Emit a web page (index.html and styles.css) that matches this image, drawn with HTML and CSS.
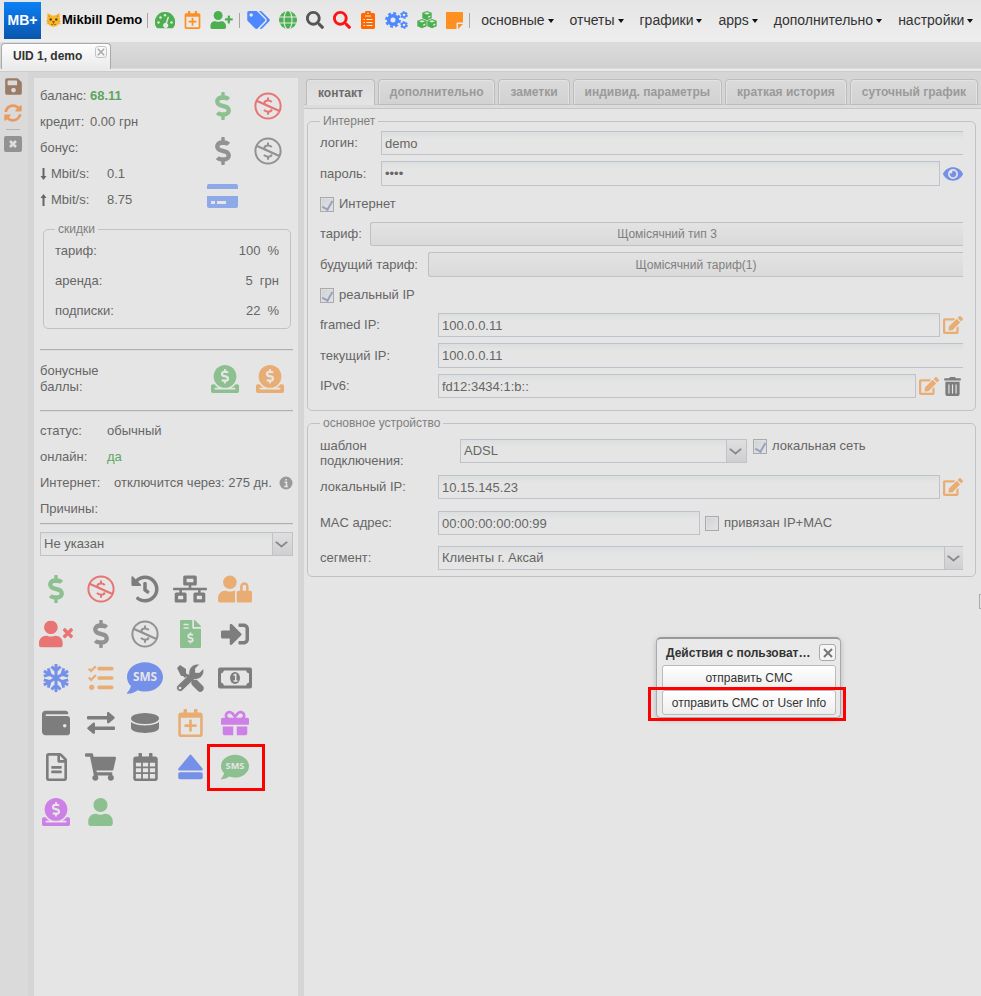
FILE: index.html
```html
<!DOCTYPE html>
<html lang="ru">
<head>
<meta charset="utf-8">
<title>Mikbill Demo</title>
<link rel="stylesheet" href="styles.css">
</head>
<body>
<svg class="sprite" aria-hidden="true">
  <symbol id="dollar" viewBox="0 0 288 512"><path d="M209.200 233.400l-108-31.600C88.700 198.200 80 186.500 80 173.500c0-16.300 13.200-29.500 29.500-29.500h66.300c12.200 0 24.200 3.700 34.200 10.500 6.100 4.100 14.300 3.100 19.500-2l34.800-34c7.100-6.900 6.100-18.400-1.800-24.500C238 74.800 207.400 64.100 176 64V16c0-8.800-7.200-16-16-16h-32c-8.800 0-16 7.200-16 16v48h-2.500C45.800 64-5.400 118.700.5 183.600c4.200 46.100 39.400 83.600 83.800 96.600l102.500 30c12.500 3.700 21.200 15.300 21.200 28.300 0 16.300-13.200 29.500-29.500 29.500h-66.300C100 368 88 364.300 78 357.500c-6.100-4.100-14.300-3.100-19.500 2l-34.800 34c-7.100 6.900-6.100 18.400 1.800 24.500 24.500 19.200 55.100 29.900 86.500 30v48c0 8.800 7.200 16 16 16h32c8.800 0 16-7.200 16-16v-48.200c46.600-.9 90.300-28.600 105.700-72.700 21.500-61.600-14.600-124.800-72.500-141.700z"/></symbol>
  <symbol id="nodollar" viewBox="0 0 28 28"><circle cx="14" cy="14" r="12.600" fill="none" stroke="currentColor" stroke-width="2"/><path d="M17.800 10c-1-1-2.300-1.500-3.900-1.500-2 0-3.500 1-3.500 2.600 0 3.900 7.400 2.100 7.400 5.900 0 1.700-1.600 2.700-3.700 2.700-1.700 0-3.200-.6-4.200-1.800M14 5.500V9M14 19.500v3.300" fill="none" stroke="currentColor" stroke-width="2"/><path d="M4 10.900 24.500 19.900" stroke="#e5e5e5" stroke-width="1"/><path d="M2.500 8.800 25.500 18.900" stroke="currentColor" stroke-width="2.200"/></symbol>
  <symbol id="donate" viewBox="0 0 512 512"><path d="M256 416c114.900 0 208-93.100 208-208S370.900 0 256 0 48 93.100 48 208s93.100 208 208 208z"/><path d="M480 352h-32.500c-19.600 26-44.600 47.700-73 64h63.800c5.300 0 9.600 3.600 9.600 8v16c0 4.400-4.300 8-9.600 8H73.600c-5.300 0-9.600-3.600-9.600-8v-16c0-4.400 4.300-8 9.600-8h63.800c-28.400-16.300-53.300-38-73-64H32c-17.700 0-32 14.300-32 32v96c0 17.700 14.300 32 32 32h448c17.700 0 32-14.300 32-32v-96c0-17.700-14.300-32-32-32z"/><svg x="180" y="70" width="152" height="272" viewBox="0 0 288 512" color="#e5e5e5"><use href="#dollar" width="288" height="512"/></svg></symbol>
  <symbol id="user" viewBox="0 0 448 512"><path d="M224 256c70.700 0 128-57.300 128-128S294.700 0 224 0 96 57.300 96 128s57.300 128 128 128zm89.600 32h-16.700c-22.200 10.200-46.900 16-72.900 16s-50.600-5.800-72.900-16h-16.700C60.200 288 0 348.200 0 422.400V464c0 26.500 21.500 48 48 48h352c26.500 0 48-21.500 48-48v-41.600c0-74.200-60.200-134.400-134.400-134.400z"/></symbol>
  <symbol id="user-plus" viewBox="0 0 640 512"><path d="M624 208h-64v-64c0-8.800-7.200-16-16-16h-32c-8.800 0-16 7.200-16 16v64h-64c-8.800 0-16 7.200-16 16v32c0 8.800 7.200 16 16 16h64v64c0 8.800 7.200 16 16 16h32c8.800 0 16-7.200 16-16v-64h64c8.800 0 16-7.200 16-16v-32c0-8.800-7.200-16-16-16z"/><use href="#user" width="448" height="512"/></symbol>
  <symbol id="user-times" viewBox="0 0 640 512"><path d="M589.600 240l45.600-45.600c6.300-6.300 6.300-16.500 0-22.800l-22.800-22.800c-6.300-6.300-16.500-6.300-22.800 0L544 194.400l-45.600-45.600c-6.300-6.300-16.500-6.300-22.800 0l-22.800 22.800c-6.300 6.300-6.300 16.500 0 22.800l45.600 45.600-45.600 45.600c-6.300 6.300-6.300 16.500 0 22.800l22.800 22.800c6.300 6.300 16.500 6.300 22.800 0l45.600-45.600 45.600 45.600c6.300 6.300 16.500 6.300 22.800 0l22.800-22.800c6.300-6.300 6.300-16.500 0-22.800z"/><use href="#user" width="448" height="512"/></symbol>
  <symbol id="user-lock" viewBox="0 0 640 512"><path d="M224 256A128 128 0 1 0 96 128a128 128 0 0 0 128 128zm96 64a63 63 0 0 1 8-30.500c-4.800-.5-9.500-1.500-14.500-1.500h-16.700a174 174 0 0 1-145.800 0h-16.700A134 134 0 0 0 0 422.400V464a48 48 0 0 0 48 48h281a63.500 63.500 0 0 1-9-32zm288-32h-32v-80a80 80 0 0 0-160 0v80h-32a32 32 0 0 0-32 32v160a32 32 0 0 0 32 32h224a32 32 0 0 0 32-32V320a32 32 0 0 0-32-32zm-80 0h-64v-80a32 32 0 0 1 64 0z"/></symbol>
  <symbol id="search" viewBox="0 0 512 512"><path d="M505 442.700L405.300 343c-4.500-4.500-10.600-7-17-7H372c27.600-35.300 44-79.700 44-128C416 93.100 322.900 0 208 0S0 93.100 0 208s93.100 208 208 208c48.300 0 92.700-16.400 128-44v16.300c0 6.400 2.500 12.500 7 17l99.700 99.700c9.400 9.400 24.600 9.400 33.900 0l28.300-28.300c9.400-9.400 9.400-24.600.1-34zM208 336c-70.700 0-128-57.200-128-128 0-70.700 57.200-128 128-128 70.700 0 128 57.200 128 128 0 70.700-57.200 128-128 128z"/></symbol>
  <symbol id="history" viewBox="0 0 512 512"><path d="M504 255.500c.3 136.700-111.200 248.400-247.800 248.500-59 0-113.200-20.500-155.800-54.900-11.100-8.900-11.900-25.500-1.900-35.600l11.300-11.300c8.600-8.600 22.400-9.600 31.900-2C173 425 212.800 440 256 440c101.700 0 184-82.300 184-184 0-101.700-82.300-184-184-184-48.800 0-93.100 19-126 49.900l50.700 50.800c10 10 2.900 27.300-11.300 27.300H24c-8.800 0-16-7.200-16-16V38.600c0-14.200 17.200-21.400 27.300-11.300l49.400 49.400C129.200 34 189.500 8 256 8c136.800 0 247.700 110.800 248 247.500zm-181 78.800l9.900-12.600c8.100-10.500 6.200-25.600-4.200-33.700L288 256.300V152c0-13.300-10.700-24-24-24h-16c-13.300 0-24 10.700-24 24v135.700l65.400 50.800c10.500 8.200 25.500 6.300 33.700-4.200z"/></symbol>
  <symbol id="network" viewBox="0 0 640 512"><path fill-rule="evenodd" d="M640 264v-16c0-8.800-7.200-16-16-16H344v-40h72c17.700 0 32-14.300 32-32V32c0-17.700-14.300-32-32-32H224c-17.700 0-32 14.300-32 32v128c0 17.700 14.300 32 32 32h72v40H16c-8.800 0-16 7.200-16 16v16c0 8.800 7.200 16 16 16h104v40H64c-17.700 0-32 14.300-32 32v128c0 17.700 14.300 32 32 32h160c17.700 0 32-14.300 32-32V352c0-17.700-14.300-32-32-32h-56v-40h304v40h-56c-17.700 0-32 14.300-32 32v128c0 17.700 14.300 32 32 32h160c17.700 0 32-14.300 32-32V352c0-17.700-14.300-32-32-32h-56v-40h104c8.800 0 16-7.200 16-16zM256 128V64h128v64zm-64 320H96v-64h96zm352 0h-96v-64h96z"/></symbol>
  <symbol id="signin" viewBox="0 0 512 512"><path d="M416 448h-84c-6.600 0-12-5.400-12-12v-40c0-6.600 5.400-12 12-12h84c17.700 0 32-14.300 32-32V160c0-17.700-14.300-32-32-32h-84c-6.600 0-12-5.400-12-12V76c0-6.600 5.400-12 12-12h84c53 0 96 43 96 96v192c0 53-43 96-96 96zm-47-201L201 79c-15-15-41-4.500-41 17v96H24c-13.300 0-24 10.700-24 24v96c0 13.300 10.700 24 24 24h136v96c0 21.500 26 32 41 17l168-168c9.300-9.400 9.300-24.600 0-34z"/></symbol>
  <symbol id="edit" viewBox="0 0 576 512"><path d="M402.600 83.200l90.200 90.200c3.800 3.800 3.800 10 0 13.800L274.400 405.600l-92.800 10.300c-12.400 1.400-22.900-9.100-21.500-21.500l10.300-92.800L388.800 83.200c3.800-3.800 10-3.800 13.800 0zm162-22.900l-48.800-48.800c-15.200-15.200-39.900-15.200-55.200 0l-35.400 35.400c-3.800 3.800-3.800 10 0 13.800l90.200 90.200c3.800 3.800 10 3.800 13.800 0l35.400-35.400c15.200-15.300 15.200-40 0-55.200zM384 346.200V448H64V128h229.800c3.200 0 6.200-1.300 8.500-3.500l40-40c7.600-7.600 2.200-20.500-8.500-20.500H48C21.500 64 0 85.500 0 112v352c0 26.500 21.500 48 48 48h352c26.500 0 48-21.500 48-48V306.200c0-10.700-12.900-16-20.500-8.500l-40 40c-2.200 2.300-3.500 5.300-3.500 8.500z"/></symbol>
  <symbol id="trash" viewBox="0 0 448 512"><path d="M32 464a48 48 0 0 0 48 48h288a48 48 0 0 0 48-48V128H32zm272-256a16 16 0 0 1 32 0v224a16 16 0 0 1-32 0zm-96 0a16 16 0 0 1 32 0v224a16 16 0 0 1-32 0zm-96 0a16 16 0 0 1 32 0v224a16 16 0 0 1-32 0zM432 32H312l-9.400-18.700A24 24 0 0 0 281 0H166.800a23.700 23.700 0 0 0-21.400 13.300L136 32H16A16 16 0 0 0 0 48v32a16 16 0 0 0 16 16h416a16 16 0 0 0 16-16V48a16 16 0 0 0-16-16z"/></symbol>
  <symbol id="eye" viewBox="0 0 576 512"><path d="M572.500 241.400C518.300 135.600 411 64 288 64S57.700 135.600 3.500 241.400a32.400 32.400 0 0 0 0 29.200C57.700 376.400 165 448 288 448s230.300-71.600 284.500-177.400a32.400 32.400 0 0 0 0-29.200zM288 400a144 144 0 1 1 144-144 144 144 0 0 1-144 144zm0-240a95.300 95.300 0 0 0-25.300 3.800 47.900 47.900 0 0 1-66.900 66.900A95.800 95.800 0 1 0 288 160z"/></symbol>
  <symbol id="save" viewBox="0 0 448 512"><path d="M434 130l-84-84a48 48 0 0 0-34-14H48C21.500 32 0 53.500 0 80v352c0 26.500 21.500 48 48 48h352c26.500 0 48-21.500 48-48V164a48 48 0 0 0-14-34zM224 416c-35.300 0-64-28.700-64-64s28.700-64 64-64 64 28.700 64 64-28.700 64-64 64zm96-304.500V212c0 6.600-5.400 12-12 12H76c-6.600 0-12-5.400-12-12V108c0-6.600 5.400-12 12-12h228.500c3.200 0 6.200 1.300 8.500 3.500l3.500 3.500a12 12 0 0 1 3.500 8.500z"/></symbol>
  <symbol id="sync" viewBox="0 0 512 512"><path d="M370.700 133.300C339.500 104 298.900 88 255.800 88c-77.400 0-144.300 53.200-162.700 126.900-1.400 5.300-6.200 9.100-11.700 9.100H24.100c-7.500 0-13.200-6.800-11.800-14.200C33.900 94.900 134.800 8 256 8c66.400 0 126.800 26.100 171.300 68.700L463 41c15.100-15.100 41-4.400 41 17v134c0 13.300-10.700 24-24 24H346c-21.400 0-32.100-25.900-17-41zM32 296h134c21.400 0 32.100 25.900 17 41l-41.700 41.700c31.300 29.300 71.800 45.300 114.900 45.300 77.400-.1 144.300-53.100 162.700-126.800 1.400-5.400 6.200-9.200 11.700-9.200h57.300c7.500 0 13.200 6.800 11.800 14.200C478 417 377.200 504 256 504c-66.400 0-126.800-26.100-171.300-68.700L49 471c-15.100 15.100-41 4.400-41-17V320c0-13.300 10.700-24 24-24z"/></symbol>
  <symbol id="tags" viewBox="0 0 640 512"><path d="M498 226L286 14a48 48 0 0 0-34-14H48C21.500 0 0 21.500 0 48v204a48 48 0 0 0 14 34l212 212c18.700 18.700 49 18.700 67.800 0l204.200-204.200c18.700-18.700 18.700-49.100 0-67.800zM112 160c-26.500 0-48-21.500-48-48s21.500-48 48-48 48 21.500 48 48-21.500 48-48 48zm514 133.800L421.800 498c-18.700 18.700-49.100 18.700-67.800 0l-.4-.4 174-174.100c17-17 26.400-39.600 26.400-63.600s-9.400-46.700-26.400-63.700L331.400 0h48.700a48 48 0 0 1 34 14L626 226c18.700 18.700 18.700 49.100 0 67.800z"/></symbol>
  <symbol id="cart" viewBox="0 0 576 512"><path d="M528 301.300l47.400-208C578.800 78.300 567.400 64 552 64H159.200L150 19.200C147.800 8 138 0 126.500 0H24C10.700 0 0 10.700 0 24v16c0 13.300 10.700 24 24 24h69.900L164 407.400C147.300 417 136 435.200 136 456c0 30.900 25 56 56 56s56-25.100 56-56c0-15.700-6.400-29.800-16.800-40h209.600C430.400 426.200 424 440.300 424 456c0 30.900 25 56 56 56s56-25.100 56-56c0-22.200-12.900-41.300-31.600-50.400l5.500-24.300c3.400-15-8-29.300-23.400-29.300H218l-6.500-32h293.200c11.200 0 21-7.800 23.300-18.700z"/></symbol>
  <symbol id="wallet" viewBox="0 0 512 512"><path d="M461 128H80c-8.800 0-16-7.200-16-16s7.200-16 16-16h384c8.800 0 16-7.200 16-16 0-26.500-21.500-48-48-48H64C28.700 32 0 60.700 0 96v320c0 35.300 28.700 64 64 64h397c28 0 51-21.500 51-48V176c0-26.500-23-48-51-48zM416 336c-17.700 0-32-14.300-32-32s14.300-32 32-32 32 14.300 32 32-14.300 32-32 32z"/></symbol>
  <symbol id="eject" viewBox="0 0 448 512"><path d="M448 384v64c0 17.700-14.300 32-32 32H32c-17.700 0-32-14.300-32-32v-64c0-17.700 14.300-32 32-32h384c17.700 0 32 14.300 32 32zM26 320h396c25 0 36-20 18-40L243 40c-10-11-28-11-38 0L8 280c-18 20-7 40 18 40z"/></symbol>
  <symbol id="gift" viewBox="0 0 512 512"><path d="M32 448c0 17.700 14.300 32 32 32h160V320H32zm256 32h160c17.700 0 32-14.300 32-32V320H288zm192-320h-42c6.200-12 10-25.500 10-40 0-48.500-39.500-88-88-88-41.600 0-68.500 21.300-103 68.300C222.500 53.300 195.600 32 154 32c-48.500 0-88 39.500-88 88 0 14.500 3.800 27.900 10 40H32c-17.700 0-32 14.300-32 32v80c0 8.800 7.200 16 16 16h480c8.800 0 16-7.200 16-16v-80c0-17.700-14.300-32-32-32zm-326 0c-22 0-40-17.900-40-40s18-40 40-40c19.900 0 34.600 3.300 86 80zm206 0h-86c51.400-76.500 65.700-80 86-80 22 0 40 17.900 40 40s-18 40-40 40z"/></symbol>
  <symbol id="cal-plus" viewBox="0 0 448 512"><path d="M336 292v24c0 6.600-5.400 12-12 12h-76v76c0 6.600-5.400 12-12 12h-24c-6.600 0-12-5.400-12-12v-76h-76c-6.600 0-12-5.400-12-12v-24c0-6.600 5.400-12 12-12h76v-76c0-6.600 5.400-12 12-12h24c6.600 0 12 5.400 12 12v76h76c6.600 0 12 5.400 12 12zm112-180v352c0 26.500-21.500 48-48 48H48c-26.500 0-48-21.500-48-48V112c0-26.500 21.500-48 48-48h48V12c0-6.600 5.400-12 12-12h40c6.600 0 12 5.400 12 12v52h128V12c0-6.600 5.400-12 12-12h40c6.600 0 12 5.400 12 12v52h48c26.500 0 48 21.500 48 48zm-48 346V160H48v298c0 3.300 2.700 6 6 6h340c3.300 0 6-2.700 6-6z"/></symbol>
  <symbol id="calendar" viewBox="0 0 448 512"><path fill-rule="evenodd" d="M400 64h-48V12c0-6.600-5.400-12-12-12h-40c-6.600 0-12 5.400-12 12v52H160V12c0-6.600-5.400-12-12-12h-40c-6.600 0-12 5.400-12 12v52H48C21.500 64 0 85.500 0 112v352c0 26.500 21.500 48 48 48h352c26.500 0 48-21.500 48-48V112c0-26.500-21.500-48-48-48zM48 176h96v72H48zm128 0h96v72h-96zm128 0h96v72h-96zM48 280h96v72H48zm128 0h96v72h-96zm128 0h96v72h-96zM48 384h96v80H48zm128 0h96v80h-96zm128 0h96v80h-96z"/></symbol>
  <symbol id="file" viewBox="0 0 384 512"><path d="M288 248v28c0 6.600-5.400 12-12 12H108c-6.600 0-12-5.400-12-12v-28c0-6.600 5.400-12 12-12h168c6.600 0 12 5.400 12 12zm-12 72H108c-6.600 0-12 5.400-12 12v28c0 6.600 5.400 12 12 12h168c6.600 0 12-5.400 12-12v-28c0-6.600-5.400-12-12-12zm108-188V464c0 26.500-21.500 48-48 48H48c-26.500 0-48-21.500-48-48V48C0 21.500 21.500 0 48 0h204c12.800 0 25 5 34 14l84 84c9 9 14 21.200 14 34zm-128-80v76h76zm80 412V176H232c-13.300 0-24-10.700-24-24V48H48v416z"/></symbol>
  <symbol id="invoice" viewBox="0 0 384 512"><path fill-rule="evenodd" d="M377 105L279 7c-4-4-10-7-17-7h-6v128h128v-6c0-6-3-12-7-17zM224 136V0H24C11 0 0 11 0 24v464c0 13 11 24 24 24h336c13 0 24-11 24-24V160H248c-13 0-24-11-24-24zM64 68h96v28H64zm0 64h96v28H64z"/><svg x="132" y="222" width="120" height="214" viewBox="0 0 288 512" color="#e5e5e5"><use href="#dollar" width="288" height="512"/></svg></symbol>
  <symbol id="sms" viewBox="0 0 512 512"><path d="M256 32C114.600 32 0 125 0 240c0 49.600 21.400 95 57 130.700C44.500 421 2.700 466 2.200 466.500c-2.200 2.300-2.800 5.700-1.500 8.700S4.800 480 8 480c66.300 0 116-31.800 140.600-51.400 32.700 12.300 69 19.400 107.400 19.400 141.400 0 256-93 256-208S397.400 32 256 32z"/><text x="256" y="300" text-anchor="middle" class="sms-text">SMS</text></symbol>
  <symbol id="snow" viewBox="0 0 28 28"><g id="snow-arm" fill="none" stroke="currentColor" stroke-width="3"><path d="M14 0v28M9.500 2.500 14 7l4.500-4.500M9.500 25.500 14 21l4.500 4.500"/></g><use href="#snow-arm" transform="rotate(60 14 14)"/><use href="#snow-arm" transform="rotate(120 14 14)"/></symbol>
  <symbol id="tasks" viewBox="0 0 28 28"><path d="M12 4h13.500M12 14h13.500M12 24h13.500" stroke="currentColor" stroke-width="4" stroke-linecap="round"/><circle cx="4" cy="24" r="2.800"/><path d="m.8 4 2.500 2.500L8.500 1.300M.8 13.500 3.300 16l5.200-5.200" fill="none" stroke="currentColor" stroke-width="2.400"/></symbol>
  <symbol id="tools" viewBox="0 0 28 28"><path d="M1 4 4 1l6 4v4l5 5-3 3-5-5H5zM15 18c0-3 3-4.500 5-3l7 7c2 2 0 6-2.500 6-1 0-2-.5-2.500-1l-6-6c-.7-.8-1-2-1-3z"/><path d="M13 10.500C12 5 16 0 22 0l1.500.4-4 4v4h4l4-4C29 10 25 16 18 15.500L6.500 26.500c-3 3-8-1.500-5-5z" stroke="#e5e5e5" stroke-width=".8"/><circle cx="4" cy="24" r="1.300" fill="#e5e5e5"/><path d="m11 11 8 8" stroke="currentColor" stroke-width="3"/></symbol>
  <symbol id="bill" viewBox="0 0 34 22"><rect width="34" height="21" y=".5" rx="2"/><path d="M6 3.500h22a4 4 0 0 0 3 3v9a4 4 0 0 0-3 3H6a4 4 0 0 0-3-3v-9a4 4 0 0 0 3-3z" fill="#e5e5e5"/><ellipse cx="17" cy="11" rx="5" ry="6"/><path d="M15.500 8.500 17 7.500h.7v6.500M15.500 14h4" fill="none" stroke="#e5e5e5" stroke-width="1.500"/></symbol>
  <symbol id="card" viewBox="0 0 31 24"><path d="M0 5V2a2 2 0 0 1 2-2h27a2 2 0 0 1 2 2v3z"/><path fill-rule="evenodd" d="M0 12h31v10a2 2 0 0 1-2 2H2a2 2 0 0 1-2-2zm4 5v3h4v-3zm6 0v3h9v-3z"/></symbol>
  <symbol id="coin" viewBox="0 0 28 20"><ellipse cx="14" cy="5.500" rx="14" ry="5.500"/><path d="M0 9c5 4.500 23 4.500 28 0v6c-1 6.500-27 6.500-28 0z"/></symbol>
  <symbol id="exchange" viewBox="0 0 28 22"><path d="M1.500 4H20V1.500c0-1.300 1.300-1.800 2.200-1l5 4.200c.8.700.8 1.300 0 2l-5 4.300c-.9.800-2.200.3-2.200-1V7.500H1.500C.5 7.500 0 7 0 6.500V5c0-.6.500-1 1.500-1zM26.500 14.500H8V12c0-1.300-1.300-1.800-2.200-1l-5 4.300c-.8.700-.8 1.300 0 2l5 4.200c.9.800 2.200.3 2.200-1V18h18.500c1 0 1.500-.4 1.500-1v-1.500c0-.6-.5-1-1.500-1z"/></symbol>
  <symbol id="gauge" viewBox="0 0 20 17"><path d="M10 0a10 10 0 0 1 8.500 15.500c-.3.500-.7.800-1.300.8H2.800c-.6 0-1-.3-1.300-.8A10 10 0 0 1 10 0z"/><g fill="#e9e9e9"><circle cx="3.500" cy="10.500" r="1.200"/><circle cx="5.500" cy="5.500" r="1.200"/><circle cx="10" cy="3.200" r="1.200"/><circle cx="16.500" cy="10.500" r="1.200"/><path d="m12.800 4.500 1.300.4-2 6.300a2.600 2.600 0 1 1-1.300-.4z"/></g></symbol>
  <symbol id="globe" viewBox="0 0 18 18"><circle cx="9" cy="9" r="9"/><g fill="none" stroke="#e9e9e9" stroke-width="1.100"><ellipse cx="9" cy="9" rx="4" ry="9.500"/><path d="M0 6h18M0 12h18"/></g></symbol>
  <symbol id="clipboard" viewBox="0 0 14 18"><path fill-rule="evenodd" d="M1.500 2H4a3 3 0 0 1 6 0h2.500c.8 0 1.500.7 1.500 1.500v13c0 .8-.7 1.500-1.500 1.500h-11C.7 18 0 17.300 0 16.500v-13C0 2.700.7 2 1.500 2z"/><path d="M4 5h6M5.500 8.500h6M5.500 11.500h6M5.500 14.500h6M2.500 8.500H4M2.500 11.500H4M2.500 14.500H4" stroke="#eee" stroke-width="1.100"/><circle cx="7" cy="2.200" r=".8" fill="#eee"/></symbol>
  <symbol id="cogs" viewBox="0 0 23 18"><g fill="none" stroke="currentColor"><circle cx="8" cy="9" r="4.300" stroke-width="3.600"/><circle cx="8" cy="9" r="6.700" stroke-width="2.400" stroke-dasharray="3 2.262"/><circle cx="19" cy="4" r="2.100" stroke-width="1.600"/><circle cx="19" cy="4" r="3.200" stroke-width="1.300" stroke-dasharray="2 1.351"/><circle cx="19" cy="14" r="2.100" stroke-width="1.600"/><circle cx="19" cy="14" r="3.200" stroke-width="1.300" stroke-dasharray="2 1.351"/></g></symbol>
  <symbol id="cubes" viewBox="0 0 20 18"><g id="cube-one"><path d="m10 0 4.700 1.700v5.500L10 9.300 5.300 7.200V1.700z"/><path d="m7 2.300 3-1 3 1-3 1.100zM11.300 7V5.300l2-.8v1.600z" fill="#e9e9e9"/></g><use href="#cube-one" transform="translate(-5 8)"/><use href="#cube-one" transform="translate(5 8)"/></symbol>
  <symbol id="note" viewBox="0 0 17 17"><path d="M1 0h15c.6 0 1 .4 1 1v9.500h-5.500c-.6 0-1 .4-1 1V17H1c-.6 0-1-.4-1-1V1c0-.6.400-1 1-1zM17 12l-5 5v-5z"/></symbol>
  <symbol id="close-box" viewBox="0 0 18 16"><rect width="18" height="16" rx="2"/><path d="m6 5 6 6m0-6-6 6" stroke="#dedede" stroke-width="2.600"/></symbol>
  <symbol id="info" viewBox="0 0 14 14"><circle cx="7" cy="7" r="6.500"/><path d="M5.500 6.300h2v4M5.300 10.500h3.600M6.300 3.700h1.500" fill="none" stroke="#e5e5e5" stroke-width="1.500"/></symbol>
  <symbol id="down" viewBox="0 0 6 12"><path d="M2 0h2v8h2l-3 4-3-4h2z"/></symbol>
  <symbol id="up" viewBox="0 0 6 12"><path d="M2 12h2V4h2L3 0 0 4h2z"/></symbol>
  <symbol id="cross" viewBox="0 0 10 10"><path d="m1 1 8 8m0-8-8 8" stroke="currentColor" stroke-width="2"/></symbol>
  <symbol id="cat" viewBox="0 0 15 14"><path d="M1.500 0 6 2.500h3L13.500 0l.5 7c0 9-13 9-13 0z" fill="#fbb929"/><path d="m2.500 2 2 1-1.500 2zm10 0-2 1 1.500 2z" fill="#e08a3c"/><circle cx="4.700" cy="6.500" r="1.200" fill="#5a3d17"/><circle cx="10.300" cy="6.500" r="1.200" fill="#5a3d17"/><path d="M6.500 8.500h2l-1 1.500zM5 11c1 1 2 .7 2.500-.5.500 1.200 1.500 1.500 2.500.5" fill="none" stroke="#7a4a1b" stroke-width=".8"/><path d="m0 8 3 .7M0 11l3-.8M15 8l-3 .7M15 11l-3-.8" stroke="#c98a2a" stroke-width=".5"/></symbol>
</svg>

<header class="topbar">
  <div class="logo">MB+</div>
  <div class="brand"><svg class="cat"><use href="#cat"/></svg>Mikbill Demo</div>
  <i class="sep"></i>
  <div class="tools">
    <svg class="green" width="20" height="17"><use href="#gauge"/></svg>
    <svg class="orange" width="17" height="18"><use href="#cal-plus"/></svg>
    <svg class="green" width="23" height="18"><use href="#user-plus"/></svg>
  </div>
  <i class="sep"></i>
  <div class="tools">
    <svg class="blue" width="23" height="18"><use href="#tags"/></svg>
    <svg class="green" width="18" height="18"><use href="#globe"/></svg>
    <svg class="dark" width="18" height="18"><use href="#search"/></svg>
    <svg class="red" width="18" height="18"><use href="#search"/></svg>
    <svg class="deep" width="16" height="18"><use href="#clipboard"/></svg>
    <svg class="blue" width="23" height="18"><use href="#cogs"/></svg>
    <svg class="green" width="20" height="18"><use href="#cubes"/></svg>
    <svg class="orange" width="17" height="17"><use href="#note"/></svg>
  </div>
  <i class="sep"></i>
  <nav class="menu">
    <a href="#">основные</a><a href="#">отчеты</a><a href="#">графики</a><a href="#">apps</a><a href="#">дополнительно</a><a href="#">настройки</a>
  </nav>
</header>

<div class="doc-tabs">
  <div class="doc-tab"><span>UID 1, demo</span><button class="doc-close" aria-label="Закрыть вкладку"><svg width="8" height="8"><use href="#cross"/></svg></button></div>
</div>

<main class="workspace">
  <aside class="rail">
    <button aria-label="Сохранить"><svg class="m-brown" width="17" height="19"><use href="#save"/></svg></button>
    <button aria-label="Обновить"><svg class="m-peach" width="18" height="18"><use href="#sync"/></svg></button>
    <i class="rail-line"></i>
    <button aria-label="Закрыть"><svg class="m-grey" width="18" height="16"><use href="#close-box"/></svg></button>
  </aside>

  <section class="summary">
    <div class="balance">
      <dl class="facts">
        <div><dt class="tight">баланс:</dt><dd class="money">68.11</dd></div>
        <div><dt class="tight">кредит:</dt><dd>0.00 грн</dd></div>
        <div><dt>бонус:</dt><dd></dd></div>
        <div><dt><svg width="7" height="12"><use href="#down"/></svg>Mbit/s:</dt><dd>0.1</dd></div>
        <div><dt><svg width="7" height="12"><use href="#up"/></svg>Mbit/s:</dt><dd>8.75</dd></div>
      </dl>
      <div class="pay">
        <button aria-label="Пополнить"><svg class="m-green" width="16" height="28"><use href="#dollar"/></svg></button>
        <button aria-label="Списать"><svg class="m-red" width="28" height="28"><use href="#nodollar"/></svg></button>
        <button aria-label="Бонус"><svg class="m-grey" width="16" height="28"><use href="#dollar"/></svg></button>
        <button aria-label="Снять бонус"><svg class="m-grey" width="28" height="28"><use href="#nodollar"/></svg></button>
        <button aria-label="Карта"><svg class="m-sky" width="31" height="24"><use href="#card"/></svg></button>
      </div>
    </div>

    <fieldset class="discounts">
      <legend>скидки</legend>
      <div class="rate"><span>тариф:</span><span>100</span><span>%</span></div>
      <div class="rate"><span>аренда:</span><span>5</span><span>грн</span></div>
      <div class="rate"><span>подписки:</span><span>22</span><span>%</span></div>
    </fieldset>

    <hr>
    <div class="points">
      <span>бонусные<br>баллы:</span>
      <button aria-label="Начислить баллы"><svg class="m-green" width="28" height="28"><use href="#donate"/></svg></button>
      <button aria-label="Списать баллы"><svg class="m-orange" width="28" height="28"><use href="#donate"/></svg></button>
    </div>
    <hr>

    <dl class="facts status">
      <div><dt>статус:</dt><dd>обычный</dd></div>
      <div><dt>онлайн:</dt><dd class="yes">да</dd></div>
      <div class="net"><dt>Интернет:</dt><dd>отключится через: 275 дн.</dd><svg width="14" height="14"><use href="#info"/></svg></div>
      <div><dt><label for="reason">Причины:</label></dt></div>
    </dl>
    <hr>
    <div class="combo reason"><select id="reason"><option>Не указан</option></select></div>

    <div class="actions">
      <button aria-label="Платеж"><svg class="m-green" width="16" height="28"><use href="#dollar"/></svg></button>
      <button aria-label="Списание"><svg class="m-red" width="28" height="28"><use href="#nodollar"/></svg></button>
      <button aria-label="История"><svg class="m-dark" width="28" height="28"><use href="#history"/></svg></button>
      <button aria-label="Сеть"><svg class="m-dark" width="34" height="28"><use href="#network"/></svg></button>
      <button aria-label="Блокировка"><svg class="m-orange" width="34" height="28"><use href="#user-lock"/></svg></button>
      <button aria-label="Удалить"><svg class="m-red" width="34" height="28"><use href="#user-times"/></svg></button>
      <button aria-label="Бонусный платеж"><svg class="m-grey" width="16" height="28"><use href="#dollar"/></svg></button>
      <button aria-label="Бонусное списание"><svg class="m-grey" width="28" height="28"><use href="#nodollar"/></svg></button>
      <button aria-label="Счет"><svg class="m-green" width="21" height="28"><use href="#invoice"/></svg></button>
      <button aria-label="Войти"><svg class="m-dark" width="28" height="28"><use href="#signin"/></svg></button>
      <button aria-label="Заморозка"><svg class="m-blue" width="28" height="28"><use href="#snow"/></svg></button>
      <button aria-label="Задачи"><svg class="m-orange" width="28" height="26"><use href="#tasks"/></svg></button>
      <button aria-label="SMS"><svg class="m-blue" width="36" height="36"><use href="#sms"/></svg></button>
      <button aria-label="Сервис"><svg class="m-dark" width="28" height="28"><use href="#tools"/></svg></button>
      <button aria-label="Наличные"><svg class="m-dark" width="34" height="22"><use href="#bill"/></svg></button>
      <button aria-label="Кошелек"><svg class="m-dark" width="28" height="28"><use href="#wallet"/></svg></button>
      <button aria-label="Перевод"><svg class="m-dark" width="28" height="22"><use href="#exchange"/></svg></button>
      <button aria-label="Монеты"><svg class="m-dark" width="28" height="20"><use href="#coin"/></svg></button>
      <button aria-label="Добавить дату"><svg class="m-orange" width="25" height="28"><use href="#cal-plus"/></svg></button>
      <button aria-label="Подарок"><svg class="m-violet" width="28" height="28"><use href="#gift"/></svg></button>
      <button aria-label="Документ"><svg class="m-dark" width="21" height="28"><use href="#file"/></svg></button>
      <button aria-label="Корзина"><svg class="m-dark" width="31" height="28"><use href="#cart"/></svg></button>
      <button aria-label="Календарь"><svg class="m-dark" width="25" height="28"><use href="#calendar"/></svg></button>
      <button aria-label="Извлечь"><svg class="m-blue" width="25" height="28"><use href="#eject"/></svg></button>
      <button class="marked" aria-label="Отправить SMS"><svg class="m-green" width="28" height="28"><use href="#sms"/></svg></button>
      <button aria-label="Подарить баллы"><svg class="m-violet" width="28" height="28"><use href="#donate"/></svg></button>
      <button aria-label="Профиль"><svg class="m-green" width="25" height="28"><use href="#user"/></svg></button>
    </div>
  </section>

  <section class="details">
    <div class="tabs" role="tablist">
      <button class="tab active" role="tab">контакт</button><button class="tab" role="tab">дополнительно</button><button class="tab" role="tab">заметки</button><button class="tab" role="tab">индивид. параметры</button><button class="tab" role="tab">краткая история</button><button class="tab" role="tab">суточный график</button>
    </div>
    <div class="tab-body">
      <fieldset class="group">
        <legend>Интернет</legend>
        <div class="row"><label class="l-short" for="login">логин:</label><input class="cut" id="login" type="text" value="demo"></div>
        <div class="row tall"><label class="l-short" for="pass">пароль:</label><input id="pass" type="password" value="demo"><button class="ico" aria-label="Показать пароль"><svg class="m-blue" width="20" height="18"><use href="#eye"/></svg></button></div>
        <div class="row"><label class="check"><input type="checkbox" checked>Интернет</label></div>
        <div class="row"><span class="l-plan">тариф:</span><button class="plan">Щомісячний тип 3</button></div>
        <div class="row tall"><span class="l-next">будущий тариф:</span><button class="plan">Щомісячний тариф(1)</button></div>
        <div class="row"><label class="check"><input type="checkbox" checked>реальный IP</label></div>
        <div class="row"><label class="l-long" for="framed">framed IP:</label><input id="framed" type="text" value="100.0.0.11"><button class="ico" aria-label="Изменить"><svg class="m-orange" width="20" height="18"><use href="#edit"/></svg></button></div>
        <div class="row tall"><label class="l-long" for="current">текущий IP:</label><input class="cut" id="current" type="text" value="100.0.0.11"></div>
        <div class="row"><label class="l-long" for="ipv6">IPv6:</label><input id="ipv6" type="text" value="fd12:3434:1:b::"><button class="ico" aria-label="Изменить"><svg class="m-orange" width="20" height="18"><use href="#edit"/></svg></button><button class="ico bin" aria-label="Удалить"><svg class="m-dark" width="17" height="19"><use href="#trash"/></svg></button></div>
      </fieldset>

      <fieldset class="group device">
        <legend>основное устройство</legend>
        <div class="row template"><label class="l-tpl" for="tpl">шаблон подключения:</label><div class="combo tpl"><select id="tpl"><option>ADSL</option></select></div><label class="check"><input type="checkbox" checked>локальная сеть</label></div>
        <div class="row"><label class="l-long" for="local">локальный IP:</label><input id="local" type="text" value="10.15.145.23"><button class="ico" aria-label="Изменить"><svg class="m-orange" width="20" height="18"><use href="#edit"/></svg></button></div>
        <div class="row spaced"><label class="l-long" for="mac">MAC адрес:</label><input class="mac" id="mac" type="text" value="00:00:00:00:00:99"><label class="check"><input type="checkbox">привязан IP+MAC</label></div>
        <div class="row"><label class="l-long" for="segment">сегмент:</label><div class="combo cut"><select id="segment"><option>Клиенты г. Аксай</option></select></div></div>
      </fieldset>
    </div>
    <i class="edge"></i>
  </section>

  <div class="dialog" role="dialog" aria-labelledby="dlg">
    <div class="dialog-head"><h2 id="dlg">Действия с пользоват…</h2><button class="dialog-close" aria-label="Закрыть окно"><svg width="10" height="10"><use href="#cross"/></svg></button></div>
    <button class="act">отправить СМС</button>
    <button class="act picked">отправить СМС от User Info</button>
  </div>
</main>
</body>
</html>
```
FILE: styles.css
```css
* { box-sizing: border-box; }
body {
  margin: 0;
  min-height: 100vh;
  display: flex;
  flex-direction: column;
  overflow: hidden;
  background: #d5d5d5;
  color: #666;
  font: 13px/16px "Liberation Sans", Arial, sans-serif;
}
button, input, select { font: inherit; color: inherit; margin: 0; }
button { padding: 0; border: 0; background: none; }
svg { display: block; flex: none; fill: currentColor; }
.sprite { position: absolute; width: 0; height: 0; }
fieldset, dl, dd, h2 { margin: 0; padding: 0; min-width: 0; }
.sms-text { font: bold 168px "Open Sans", "Noto Sans", sans-serif; fill: #e5e5e5; }

.green { color: #4caf50; }
.orange { color: #ff8f1f; }
.deep { color: #ff6a00; }
.blue { color: #4d88ff; }
.dark { color: #555; }
.red { color: #ff1414; }
.m-green { color: #8dc091; }
.m-red { color: #e87474; }
.m-orange { color: #e9ad74; }
.m-peach { color: #e99a62; }
.m-brown { color: #9b7a66; }
.m-grey { color: #929292; }
.m-dark { color: #7d7d7d; }
.m-blue { color: #7490e8; }
.m-sky { color: #8da9e8; }
.m-violet { color: #cd80e6; }

/* Top bar */
.topbar {
  display: flex;
  align-items: center;
  height: 42px;
  padding: 0 4px 2px;
  background: linear-gradient(#e5e5e5, #eee);
  color: #333;
  white-space: nowrap;
}
.logo {
  width: 37px;
  height: 37px;
  background: linear-gradient(#0b80f5, #0a56ad);
  color: #fff;
  font-size: 14px;
  font-weight: bold;
  line-height: 37px;
  text-align: center;
}
.brand { display: flex; align-items: center; gap: 1px; margin: 0 3px 0 5px; color: #000; font-weight: bold; }
.cat { width: 15px; height: 14px; }
.sep { width: 1px; height: 15px; margin: 0 7px 0 2px; background: #aaa69c; }
.tools { display: flex; align-items: center; gap: 9px; margin-right: 4px; }
.menu { display: flex; gap: 16px; margin-left: 4px; font-size: 14px; }
.menu a { display: flex; align-items: center; gap: 3px; color: #333; text-decoration: none; }
.menu a::after { content: ""; margin-top: 2px; border: 3px solid transparent; border-top: 4px solid #111; border-bottom: 0; }

/* Open documents */
.doc-tabs {
  display: flex;
  align-items: flex-end;
  height: 30px;
  padding: 0 1px 2px;
  border-bottom: 1px solid #ccc;
  background: linear-gradient(#dcdcdc, #d0d0d0 26px, #eaeaea 27px);
}
.doc-tab {
  display: flex;
  gap: 13px;
  height: 26px;
  padding: 4px 3px 0 11px;
  border: 1px solid #aaa;
  border-bottom: 0;
  border-radius: 4px 4px 0 0;
  background: linear-gradient(#fdfdfd, #eaeaea);
  color: #333;
  font-size: 12px;
  font-weight: bold;
}
.doc-close {
  display: grid;
  place-items: center;
  width: 12px;
  height: 12px;
  margin-top: -2px;
  border: 1px solid #c4c4c4;
  border-radius: 3px;
  color: #aaa;
}

/* Columns */
.workspace { position: relative; display: flex; flex: 1; min-height: 924px; }
.rail {
  display: flex;
  flex-direction: column;
  align-items: center;
  width: 28px;
  padding: 5px 2px 0 0;
  background: #dadada;
}
.rail button + button { margin-top: 8px; }
.rail-line { width: 14px; height: 1px; margin: 7px 0 6px; background: #b4b4b4; }
.summary { width: 264px; flex: none; margin: 6px 6px 0; background: #e5e5e5; }
.details { position: relative; flex: 1; min-width: 0; margin-top: 7px; }

/* Account summary */
.balance { display: flex; justify-content: space-between; height: 147px; padding: 5px 8px 0 6px; }
.facts > div { display: flex; align-items: center; height: 26px; white-space: nowrap; }
.facts dt { display: flex; align-items: center; gap: 4px; width: 67px; }
.facts dt.tight { width: 50px; }
.money { color: #5da561; font-weight: bold; }
.yes { color: #5da561; }
.pay { display: grid; grid-template-columns: 45px 45px; grid-auto-rows: 45px; }
.pay button, .actions button { display: grid; place-items: center; }
fieldset { border: 1px solid #c1c1ca; border-radius: 5px; }
legend { height: 14px; padding: 0 3px; color: #808080; font-size: 12px; line-height: 14px; }
.discounts { margin: -3px 7px 0 9px; padding: 0 11px 2px; }
.rate { display: flex; align-items: center; gap: 7px; height: 30px; }
.rate span:first-child { margin-right: auto; }
hr { width: auto; height: 2px; margin: 0 5px 0 6px; border: 0; border-top: 1px solid #b0b0b0; border-bottom: 1px solid #dcdcdc; }
.discounts + hr { margin-top: 20px; }
.points { display: flex; align-items: center; height: 59px; padding: 0 14px 4px 6px; gap: 17px; }
.points span { margin: 0 auto 0 0; }
.status { height: 111px; padding: 6px 5px 0 6px; }
.facts .net { justify-content: space-between; }
.net svg { color: #999; }
.reason { margin: 7px 5px 0 6px; }
.actions {
  display: grid;
  grid-template-columns: repeat(5, 1fr);
  grid-auto-rows: 1fr;
  height: 267px;
  margin: 11px 41px 0 0;
}
.actions .marked { position: relative; }
.marked::after {
  content: "";
  position: absolute;
  inset: -1px -8px -1px -5px;
  border: 3px solid #f00;
}

/* Drop-downs and fields */
.combo { position: relative; display: flex; height: 24px; }
.combo select {
  flex: 1;
  min-width: 0;
  height: 24px;
  padding: 0 24px 0 3px;
  appearance: none;
  border: 1px solid #bfc2ca;
  border-radius: 0;
  background: linear-gradient(#dcdfdf, #e4e5e4 7px);
}
.combo::after {
  content: "";
  position: absolute;
  top: 1px;
  right: 1px;
  bottom: 1px;
  width: 19px;
  border-left: 1px solid #bfc2ca;
  background: linear-gradient(#dfdfdf, #cfcfcf);
  pointer-events: none;
}
.combo::before {
  content: "";
  position: absolute;
  z-index: 1;
  top: 6px;
  right: 7px;
  width: 7px;
  height: 7px;
  border: solid #888;
  border-width: 0 2px 2px 0;
  transform: scaleY(.8) rotate(45deg);
  pointer-events: none;
}
.combo.cut { flex: 1; }
.combo.cut select { border-right: 0; }
.combo.cut::after { right: 0; width: 18px; }
.combo.cut::before { right: 5px; }

/* Tabs */
.tabs {
  display: flex;
  gap: 3px;
  padding-left: 2px;
  height: 30px;
  border-bottom: 1px solid #c6c6c6;
  background: linear-gradient(transparent 25px, #c6c6c6 25px, #c6c6c6 26px, #dcdcdc 26px);
  overflow: hidden;
}
.tab {
  flex: none;
  height: 26px;
  padding: 0 11px;
  border: 1px solid #bcbcbc;
  border-radius: 4px 4px 0 0;
  background: linear-gradient(#dadada, #d2d2d2);
  box-shadow: inset 1px 1px #e2e2e2, inset -1px 0 #e2e2e2;
  color: #9a9a9a;
  font-size: 12px;
  font-weight: bold;
}
.tab.active { border-bottom: 0; background: linear-gradient(#dcdcdc, #e4e4e4); color: #6c6c6c; }
.tab-body { height: calc(100% - 30px); padding: 5px 5px 0 3px; background: #e5e5e5; }
.group { padding: 3px 12px 12px; display: flex; flex-direction: column; gap: 6px; }
.row { display: flex; align-items: center; height: 24px; }
.tall { height: 25px; }
.l-short, .l-plan, .l-next, .l-long, .l-tpl { flex: none; }
.l-short { width: 61px; }
.l-plan { width: 50px; }
.l-next { width: 108px; }
.l-long { width: 118px; }
.l-tpl { width: 140px; padding-right: 40px; line-height: 15px; }
.row > input {
  flex: 1;
  min-width: 0;
  height: 100%;
  padding: 0 3px;
  border: 1px solid #bfc2ca;
  background: linear-gradient(#dcdfdf, #e4e5e4 7px);
}
.row > .cut { border-right: 0; }
.plan {
  flex: 1;
  height: 100%;
  border: 1px solid #c0c0c2;
  border-right: 0;
  border-radius: 3px 0 0 3px;
  background: linear-gradient(#e3e3e3, #dadada);
  color: #808080;
  font-size: 12px;
}
.ico { flex: none; margin-left: 3px; }
.bin { margin: 0 2px 0 5px; }
.check { display: flex; align-items: center; gap: 5px; }
.check input {
  appearance: none;
  width: 14px;
  height: 15px;
  margin-top: 1px;
  border: 1px solid #aaa;
  background: linear-gradient(135deg, #cfd2d6, #e4e4e4);
  box-shadow: inset 0 0 0 1px #dedede;
}
.check input:checked::before {
  content: "";
  display: block;
  width: 5px;
  height: 9px;
  margin: 1px 0 0 3px;
  border: solid #98a1c4;
  border-width: 0 2px 2px 0;
  transform: rotate(30deg);
}
.device { margin-top: 5px; padding-bottom: 6px; }
.template { height: 30px; margin: 5px 0 1px; align-items: flex-start; }
.tpl { width: 287px; margin: 1px 6px 0 0; }
.spaced { margin: 6px 0 5px; }
.row > .mac { flex: none; width: 262px; margin-right: 5px; }
.edge { position: absolute; top: 515px; right: 0; width: 2px; height: 15px; border: 1px solid #aaa; border-right: 0; }

/* Floating window */
.dialog {
  position: absolute;
  left: 656px;
  top: 565px;
  width: 185px;
  padding: 1px 4px 2px 5px;
  border: 1px solid #aaa;
  border-top: 2px solid #999;
  border-radius: 5px;
  background: #e9e9e9;
  box-shadow: 0 2px 5px #8888;
  color: #333;
}
.dialog-head { display: flex; align-items: center; justify-content: space-between; height: 25px; padding-left: 4px; }
.dialog h2 { font-size: 12px; line-height: 16px; white-space: nowrap; }
.dialog-close {
  display: grid;
  place-items: center;
  width: 17px;
  height: 17px;
  border: 1px solid #aaa;
  border-radius: 3px;
  background: #f5f5f5;
  color: #777;
}
.act {
  position: relative;
  display: block;
  width: 100%;
  height: 25px;
  border: 1px solid #bbb;
  border-radius: 3px;
  background: linear-gradient(#fff, #eee);
  font-size: 12px;
}
.picked::after { content: ""; position: absolute; inset: -4px -11px -7px -15px; border: 3px solid #f00; }
```
